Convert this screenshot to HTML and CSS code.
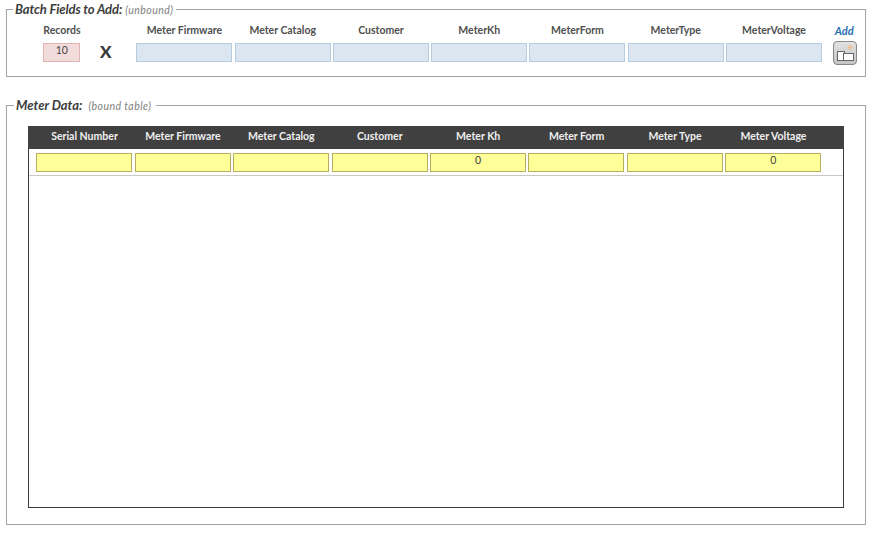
FILE: index.html
```html
<!DOCTYPE html>
<html lang="en">
<head>
<meta charset="utf-8">
<title>Batch Fields</title>
<link rel="stylesheet" href="styles.css">
</head>
<body>
<fieldset class="panel batch">
  <legend class="legend"><b class="title">Batch Fields to Add:</b> <span class="note">(unbound)</span></legend>
  <div class="batch-grid">
    <div class="lab">Records</div>
    <div></div>
    <div class="lab">Meter Firmware</div>
    <div class="lab">Meter Catalog</div>
    <div class="lab">Customer</div>
    <div class="lab">MeterKh</div>
    <div class="lab">MeterForm</div>
    <div class="lab">MeterType</div>
    <div class="lab">MeterVoltage</div>
    <div class="add-lab">Add</div>
    <div class="cell pink">10</div>
    <div class="times">X</div>
    <div class="cell blue"></div>
    <div class="cell blue"></div>
    <div class="cell blue"></div>
    <div class="cell blue"></div>
    <div class="cell blue"></div>
    <div class="cell blue"></div>
    <div class="cell blue"></div>
    <div class="add-cell">
      <button class="add-btn" type="button" aria-label="Add">
        <svg width="24" height="24" viewBox="0 0 24 24">
          <path d="M17 3.500v6M14 6.500h6M15 4.500l4 4M19 4.500l-4 4" stroke="#eebf90" stroke-width="1" fill="none"/>
          <rect x="4.500" y="10.500" width="7" height="9" fill="#fff" stroke="#666"/>
          <rect x="10.500" y="12.500" width="10" height="7" fill="#fff" stroke="#666"/>
        </svg>
      </button>
    </div>
  </div>
</fieldset>
<fieldset class="panel meter">
  <legend class="legend legend-b"><b>Meter Data:</b> <span class="note">(bound table)</span></legend>
  <div class="table">
    <div class="thead">
      <div>Serial Number</div>
      <div>Meter Firmware</div>
      <div>Meter Catalog</div>
      <div>Customer</div>
      <div>Meter Kh</div>
      <div>Meter Form</div>
      <div>Meter Type</div>
      <div>Meter Voltage</div>
    </div>
    <div class="trow">
      <div class="cell yellow"></div>
      <div class="cell yellow"></div>
      <div class="cell yellow"></div>
      <div class="cell yellow"></div>
      <div class="cell yellow">0</div>
      <div class="cell yellow"></div>
      <div class="cell yellow"></div>
      <div class="cell yellow">0</div>
    </div>
  </div>
</fieldset>
</body>
</html>
```
FILE: styles.css
```css
* { box-sizing: border-box; }
html, body { margin: 0; padding: 0; background: #fff; }
body {
  width: 876px;
  height: 533px;
  overflow: hidden;
  padding: 2px 10px 0 6px;
  font-family: "Lato", "Open Sans", "Liberation Sans", sans-serif;
  color: #444;
}
.panel {
  margin: 0;
  padding: 0;
  min-width: 0;
  border: 1px solid #a3a3a3;
}
.batch { height: 75px; }
.meter { height: 427px; margin-top: 21px; padding: 13px 21px 0 21px; }
.legend {
  margin-left: 6px;
  padding: 0 3px 0 2px;
  font-size: 13px;
  line-height: 14px;
  font-style: italic;
  color: #3c3c3c;
  white-space: nowrap;
}
.title { letter-spacing: -0.100px; }
.legend-b { margin-left: -14px; padding-right: 5px; }
.legend-b .note { margin-left: 3px; }
.note {
  font-size: 10.500px;
  font-weight: 400;
  color: #808080;
  letter-spacing: 0.450px;
}
.batch-grid {
  display: grid;
  grid-template-columns: 37px 52px repeat(7, 96.280px) 40px;
  grid-template-rows: 14px 19px;
  column-gap: 2px;
  row-gap: 6px;
  padding: 6px 0 0 36.300px;
}
.lab {
  font-size: 10.500px;
  font-weight: 700;
  line-height: 14px;
  text-align: center;
  color: #505050;
  white-space: nowrap;
}
.add-lab {
  font-size: 11px;
  font-weight: 700;
  font-style: italic;
  line-height: 16px;
  text-align: center;
  color: #1f6fb2;
}
.cell {
  height: 19px;
  font-size: 10.500px;
  line-height: 13px;
  text-align: center;
  color: #444;
  border: 1px solid;
}
.pink { background: #f2dcdb; border-color: #dfb4b2; }
.blue { width: 96px; background: #dce6f1; border-color: #b8cce0; }
.yellow { width: 96px; background: #ffff99; border-color: #b9ad60; }
.times {
  font-size: 17px;
  font-weight: 900;
  line-height: 17px;
  color: #3a3a3a;
  text-align: center;
  padding-right: 5px;
}
.add-cell { position: relative; }
.add-btn {
  position: absolute;
  left: 9px;
  top: -2px;
  width: 24px;
  height: 24px;
  padding: 0;
  border: 1px solid #888;
  border-radius: 4px;
  background: linear-gradient(#e2e2e2, #c4c4c4);
}
.add-btn svg { display: block; margin: -1px; }
.table {
  height: 382px;
  border: 1px solid #3c3c3c;
  border-top: 0;
}
.thead {
  display: grid;
  grid-template-columns: repeat(8, 96.430px);
  column-gap: 2px;
  height: 23px;
  margin: 0 -1px;
  padding: 0 0 0 8.300px;
  background: #404040;
  color: #f0f0f0;
  font-size: 10.500px;
  font-weight: 700;
  line-height: 21px;
  text-align: center;
  white-space: nowrap;
}
.trow {
  display: grid;
  grid-template-columns: repeat(8, 96.430px);
  column-gap: 2px;
  height: 27px;
  padding: 4px 0 0 7.300px;
  border-bottom: 1px solid #c8c8c8;
}
```
